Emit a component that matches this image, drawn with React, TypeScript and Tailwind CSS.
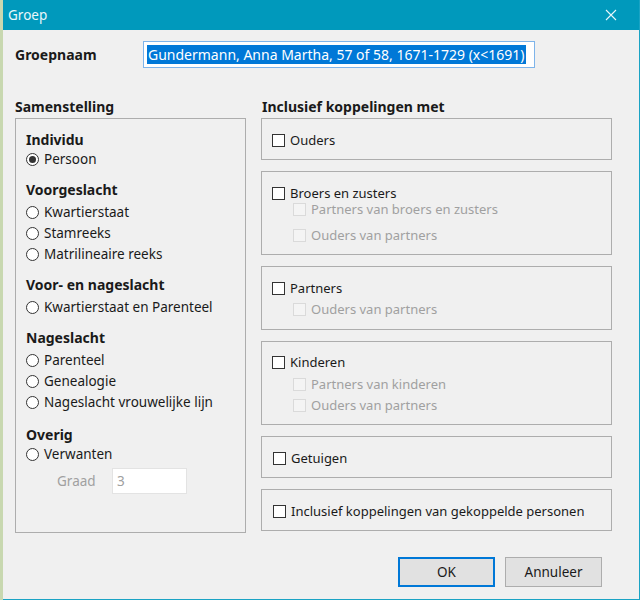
import React from 'react';

const font = { fontFamily: '"Noto Sans", "Liberation Sans", sans-serif' };

const Radio = ({ label, checked = false }: { label: string; checked?: boolean }) => (
  <div className="flex h-[21px] items-center gap-[5px]">
    <span className="flex h-[13px] w-[13px] items-center justify-center rounded-full border border-[#333] bg-white">
      {checked && <span className="h-[7px] w-[7px] rounded-full bg-[#333]" />}
    </span>
    <span>{label}</span>
  </div>
);

const Check = ({ label, disabled = false, className = '' }: { label: string; disabled?: boolean; className?: string }) => (
  <div className={`flex h-[21px] items-center gap-[5px] ${className}`}>
    <span
      className={
        disabled
          ? 'h-[13px] w-[13px] border border-[#dadada] bg-[#f4f4f4]'
          : 'h-[13px] w-[13px] border border-[#333] bg-white'
      }
    />
    <span className={disabled ? 'text-[#a0a0a0]' : ''}>{label}</span>
  </div>
);

const Heading = ({ children, className = '' }: { children: React.ReactNode; className?: string }) => (
  <div className={`flex h-[20px] items-center text-[14px] font-bold ${className}`}>{children}</div>
);

const Box = ({ className = '', children }: { className?: string; children: React.ReactNode }) => (
  <div className={`border border-[#adadad] ${className}`}>{children}</div>
);

export default function App() {
  return (
    <div style={font} className="flex h-[600px] w-[640px] text-[13.5px] text-[#1a1a1a]">
      <div className="w-[3px] bg-[#c8d8b0]" />
      <div className="flex flex-1 flex-col border-r border-b border-[#1aa3c4] bg-[#f0f0f0]">
        {/* title bar */}
        <div className="flex h-[30px] items-center justify-between bg-[#0099bc] pl-[5px] pr-[22px] text-[#e8f7fb]">
          <span className="text-[13.5px]">Groep</span>
          <svg width="12" height="12" viewBox="0 0 12 12" className="stroke-[#e8f7fb]">
            <path d="M1 1L11 11M11 1L1 11" strokeWidth="1.1" />
          </svg>
        </div>

        <div className="flex flex-col px-[12px]">
          {/* name row */}
          <div className="mt-[11px] flex h-[27px] items-center">
            <span className="w-[128px] text-[14px] font-bold">Groepnaam</span>
            <div className="flex h-[27px] w-[392px] items-center border border-[#7eb4ea] bg-white pl-[3px]">
              <span className="bg-[#0078d7] px-[1px] text-[14px] leading-[19px] text-white">
                Gundermann, Anna Martha, 57 of 58, 1671-1729 (x&lt;1691)
              </span>
            </div>
          </div>

          <div className="mt-[28px] flex gap-[15px]">
            {/* left column */}
            <div className="flex w-[231px] flex-col">
              <Heading>Samenstelling</Heading>
              <Box className="mt-[2px] h-[415px] px-[10px] pt-[10px]">
                <Heading>Individu</Heading>
                <Radio label="Persoon" checked />

                <Heading className="mt-[9px]">Voorgeslacht</Heading>
                <div className="mt-[3px]">
                  <Radio label="Kwartierstaat" />
                  <Radio label="Stamreeks" />
                  <Radio label="Matrilineaire reeks" />
                </div>

                <Heading className="mt-[9px]">Voor- en nageslacht</Heading>
                <div className="mt-[3px]">
                  <Radio label="Kwartierstaat en Parenteel" />
                </div>

                <Heading className="mt-[9px]">Nageslacht</Heading>
                <div className="mt-[3px]">
                  <Radio label="Parenteel" />
                  <Radio label="Genealogie" />
                  <Radio label="Nageslacht vrouwelijke lijn" />
                </div>

                <Heading className="mt-[11px]">Overig</Heading>
                <Radio label="Verwanten" />
                <div className="mt-[3px] flex h-[26px] items-center">
                  <span className="ml-[31px] w-[55px] text-[#a0a0a0]">Graad</span>
                  <div className="flex h-[26px] w-[75px] items-center border border-[#e3e3e3] bg-white pl-[4px] text-[#a0a0a0]">
                    3
                  </div>
                </div>
              </Box>
            </div>

            {/* right column */}
            <div className="flex w-[351px] flex-col">
              <Heading className="ml-[1px]">Inclusief koppelingen met</Heading>
              <div className="mt-[2px] flex flex-col gap-[11px] text-[13px]">
                <Box className="h-[42px] px-[10px] pt-[11px]">
                  <Check label="Ouders" />
                </Box>
                <Box className="h-[84px] px-[10px] pt-[11px]">
                  <Check label="Broers en zusters" />
                  <Check label="Partners van broers en zusters" disabled className="-mt-[5px] ml-[21px]" />
                  <Check label="Ouders van partners" disabled className="mt-[5px] ml-[21px]" />
                </Box>
                <Box className="h-[64px] px-[10px] pt-[11px]">
                  <Check label="Partners" />
                  <Check label="Ouders van partners" disabled className="ml-[21px]" />
                </Box>
                <Box className="h-[84px] px-[10px] pt-[10px]">
                  <Check label="Kinderen" />
                  <Check label="Partners van kinderen" disabled className="mt-[1px] ml-[21px]" />
                  <Check label="Ouders van partners" disabled className="ml-[21px]" />
                </Box>
                <Box className="h-[42px] px-[11px] pt-[11px]">
                  <Check label="Getuigen" />
                </Box>
                <Box className="h-[42px] px-[11px] pt-[11px]">
                  <Check label="Inclusief koppelingen van gekoppelde personen" />
                </Box>
              </div>
            </div>
          </div>

          {/* buttons */}
          <div className="mt-[24px] flex justify-end gap-[10px] pr-[25px]">
            <button className="h-[30px] w-[97px] border border-[#0078d7] bg-[#e1e1e1] shadow-[inset_0_0_0_1px_#0078d7]">
              OK
            </button>
            <button className="h-[30px] w-[97px] border border-[#adadad] bg-[#e1e1e1]">Annuleer</button>
          </div>
        </div>
      </div>
    </div>
  );
}
